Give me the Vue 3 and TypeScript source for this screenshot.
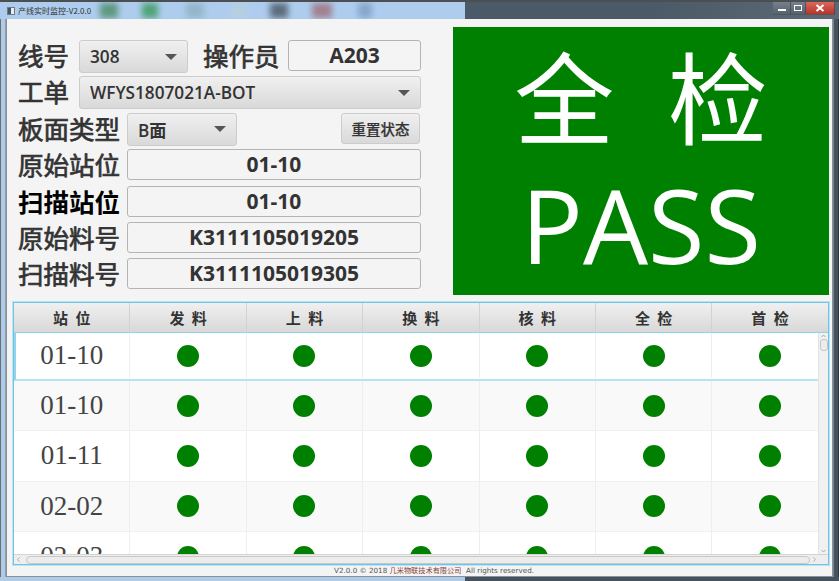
<template>
  <div class="window">
    <div class="titlebar">
      <span class="aero aero-blue"></span>
      <span class="aero aero-dark"></span>
      <span v-for="b in blurs" :key="b.left" class="blur" :style="{ left: b.left + 'px', width: b.width + 'px', background: b.color }"></span>
      <span class="app-icon"><i></i></span>
      <span class="title">产线实时监控-V2.0.0</span>
      <div class="win-btns">
        <span class="win-btn"><svg width="10" height="8" viewBox="0 0 10 8"><rect x="1" y="5" width="8" height="2" fill="#fff" /></svg></span>
        <span class="win-btn max"><svg width="10" height="8" viewBox="0 0 10 8"><rect x="1.5" y="1.5" width="7" height="5" fill="none" stroke="#fff" /></svg></span>
        <span class="win-btn close"><svg width="10" height="8" viewBox="0 0 10 8"><path d="M1.5 1 L8.5 7 M8.5 1 L1.5 7" stroke="#fff" stroke-width="2" /></svg></span>
      </div>
    </div>

    <div class="middle">
      <div class="frame frame-left"></div>
      <div class="client">
        <div class="top">
          <div class="form">
            <div class="row">
              <label class="lb lb2">线号</label>
              <div class="select s-line"><span>308</span><i class="caret"></i></div>
              <label class="lb lb3 op">操作员</label>
              <div class="field f-op">A203</div>
            </div>
            <div class="row">
              <label class="lb lb2">工单</label>
              <div class="select s-order"><span>WFYS1807021A-BOT</span><i class="caret"></i></div>
            </div>
            <div class="row">
              <label class="lb lb4">板面类型</label>
              <div class="select s-side"><span>B面</span><i class="caret"></i></div>
              <button class="reset">重置状态</button>
            </div>
            <div v-for="f in fields" :key="f.label" class="row">
              <label class="lb lb4" :class="{ strong: f.strong }">{{ f.label }}</label>
              <div class="field grow">{{ f.value }}</div>
            </div>
          </div>
          <div class="result">
            <div class="r-top">全 检</div>
            <div class="r-bottom">PASS</div>
          </div>
        </div>

        <div class="table">
          <div class="thead">
            <div v-for="h in headers" :key="h" class="th">{{ h }}</div>
            <div class="th-fill"></div>
          </div>
          <div class="tbody">
            <div class="rows">
              <div v-for="(r, i) in rows" :key="i" class="tr" :class="{ selected: i === 0, odd: i % 2 === 1 }">
                <div class="td code">{{ r }}</div>
                <div v-for="n in 6" :key="n" class="td"><span class="dot"></span></div>
              </div>
            </div>
            <div class="vbar">
              <svg width="9" height="6" viewBox="0 0 9 6"><path d="M2.5 4 L4.5 2 L6.5 4" fill="none" stroke="#aaa" /></svg>
              <span class="vthumb"></span>
              <svg class="v-down" width="9" height="6" viewBox="0 0 9 6"><path d="M2.5 2 L4.5 4 L6.5 2" fill="none" stroke="#aaa" /></svg>
            </div>
          </div>
          <div class="hbar">
            <svg width="9" height="9" viewBox="0 0 9 9"><path d="M5.5 2.5 L3.5 4.5 L5.5 6.5" fill="none" stroke="#aaa" /></svg>
            <span class="hthumb"></span>
            <svg width="9" height="9" viewBox="0 0 9 9"><path d="M3.5 2.5 L5.5 4.5 L3.5 6.5" fill="none" stroke="#aaa" /></svg>
            <span class="corner"></span>
          </div>
        </div>

        <div class="footer">V2.0.0 © 2018 <em>几米物联技术有限公司</em>&nbsp; All rights reserved.</div>
      </div>
      <div class="frame frame-right"></div>
    </div>

    <div class="bottom-edge"></div>
  </div>
</template>

<script setup lang="ts">
interface FieldRow {
  label: string;
  value: string;
  strong?: boolean;
}

const fields: FieldRow[] = [
  { label: '原始站位', value: '01-10' },
  { label: '扫描站位', value: '01-10', strong: true },
  { label: '原始料号', value: 'K3111105019205' },
  { label: '扫描料号', value: 'K3111105019305' }
];

const headers = ['站 位', '发 料', '上 料', '换 料', '核 料', '全 检', '首 检'];
const rows = ['01-10', '01-10', '01-11', '02-02', '02-03'];

// blurred desktop icons showing through the aero title bar
const blurs = [
  { left: 100, width: 18, color: '#4f8f6a' },
  { left: 142, width: 16, color: '#3f9a63' },
  { left: 186, width: 18, color: '#8fb2c4' },
  { left: 232, width: 14, color: '#b9cfdd' },
  { left: 270, width: 18, color: '#4d5c68' },
  { left: 312, width: 20, color: '#a0747f' },
  { left: 358, width: 14, color: '#7f9fc4' }
];
</script>

<style>
html,
body {
  margin: 0;
  overflow: hidden;
  background: #3a4149;
}
</style>

<style scoped>
.window {
  width: 839px;
  height: 581px;
  display: flex;
  flex-direction: column;
  font-family: "Open Sans", "Noto Sans CJK SC", sans-serif;
  overflow: hidden;
}

.titlebar {
  position: relative;
  height: 19px;
  flex: none;
  padding-left: 7px;
  display: flex;
  align-items: center;
  border-top: 2px solid #4c4f52;
  box-sizing: border-box;
  overflow: hidden;
}

.aero {
  position: absolute;
  top: 0;
  bottom: 0;
}

.aero-blue {
  left: 0;
  width: 465px;
  background: #aecdee;
}

.aero-dark {
  left: 465px;
  right: 0;
  background: linear-gradient(90deg, #4a5a68, #4b5a68 50%, #5d6975);
}

.blur {
  position: absolute;
  top: 1px;
  height: 15px;
  filter: blur(3px);
  opacity: 0.85;
}

.app-icon {
  position: relative;
  width: 6px;
  height: 6px;
  border: 1px solid #778;
  background: #e8eef2;
}

.app-icon i {
  position: absolute;
  left: 0;
  top: 0;
  width: 3px;
  height: 6px;
  background: #3c5668;
}

.title {
  position: relative;
  margin-left: 3px;
  font-size: 8px;
  color: #333;
  font-family: "Noto Sans CJK SC", sans-serif;
  line-height: 1;
}

.win-btns {
  position: absolute;
  right: 4px;
  top: 0;
  display: flex;
  height: 13px;
}

.win-btn {
  width: 18px;
  box-sizing: border-box;
  display: flex;
  align-items: center;
  justify-content: center;
  border: 1px solid rgba(60, 70, 80, 0.7);
  border-top: none;
  border-left: none;
  background: linear-gradient(#75818d, #56616c);
}

.win-btn.max {
  width: 15px;
}

.win-btn.close {
  width: 29px;
  background: linear-gradient(#d9695a, #b5352a);
}

.middle {
  flex: 1;
  min-height: 0;
  display: flex;
}

.frame {
  width: 6px;
  flex: none;
  box-sizing: border-box;
}

.frame-left {
  background: #aecbe8;
  border-left: 1px solid #6a6f75;
  border-right: 1px solid #8f9dae;
}

.frame-right {
  background: #46525e;
  border-left: 1px solid #77828d;
  border-right: 1px solid #2f363d;
}

.bottom-edge {
  height: 4px;
  flex: none;
  background: #aecbe8;
  border-right: 374px solid #46525e;
}

.client {
  flex: 1;
  min-width: 0;
  background: #f4f4f4;
  display: flex;
  flex-direction: column;
  padding: 8px 3px 0 6px;
  border-left: 1px solid #8b9197;
  border-right: 1px solid #8b9197;
  border-bottom: 1px solid #8b9197;
  box-sizing: border-box;
}

.top {
  display: flex;
  height: 268px;
  flex: none;
}

.form {
  width: 408px;
  padding: 13px 0 0 5px;
  box-sizing: border-box;
  display: flex;
  flex-direction: column;
  flex: none;
}

.row {
  display: flex;
  align-items: flex-start;
  height: 36.4px;
  flex: none;
}

.lb {
  font-family: "Noto Sans CJK SC", sans-serif;
  font-size: 25.5px;
  font-weight: 400;
  -webkit-text-stroke: 0.7px #333;
  color: #333;
  line-height: 30px;
  white-space: nowrap;
}

.lb2 {
  width: 61px;
  flex: none;
}

.lb3 {
  width: 85px;
  flex: none;
}

.lb4 {
  width: 109px;
  flex: none;
}

.op {
  margin-left: 15px;
}

.strong {
  font-weight: 700;
  color: #000;
  -webkit-text-stroke: 0;
}

.select {
  box-sizing: border-box;
  height: 33px;
  display: flex;
  align-items: center;
  justify-content: space-between;
  padding: 0 10px;
  border-radius: 3px;
  border: 1px solid #cccccc;
  background: linear-gradient(#f0f0f0, #d9d9d9);
  font-size: 17.2px;
  font-weight: 600;
  color: #333;
  font-family: "Open Sans", "Noto Sans CJK SC", sans-serif;
}

.s-line {
  width: 109px;
}

.s-order {
  width: 342px;
}

.s-side {
  width: 110px;
}

.caret {
  width: 0;
  height: 0;
  border-left: 6px solid transparent;
  border-right: 6px solid transparent;
  border-top: 6px solid #555;
}

.field {
  box-sizing: border-box;
  height: 31px;
  padding-bottom: 1px;
  display: flex;
  align-items: center;
  justify-content: center;
  border: 1px solid #b4b4b4;
  border-radius: 3px;
  background: #f4f4f4;
  font-size: 21px;
  font-weight: 700;
  color: #333;
}

.f-op {
  width: 133px;
}

.grow {
  width: 294px;
}

.reset {
  box-sizing: border-box;
  width: 79px;
  height: 31px;
  margin-left: auto;
  margin-right: 1px;
  padding: 0;
  border: 1px solid #cccccc;
  border-radius: 3px;
  background: linear-gradient(#f0f0f0, #d9d9d9);
  font-family: "Noto Sans CJK SC", sans-serif;
  font-size: 14.5px;
  font-weight: 500;
  -webkit-text-stroke: 0.2px #333;
  color: #333;
}

.result {
  margin-left: 32px;
  width: 376px;
  height: 268px;
  flex: none;
  background: #008000;
  color: #fff;
  display: flex;
  flex-direction: column;
  align-items: center;
}

.r-top {
  font-family: "Noto Sans CJK SC", sans-serif;
  font-size: 100px;
  line-height: 124px;
  margin-top: 5px;
  white-space: pre;
  word-spacing: 31px;
}

.r-bottom {
  font-family: "Open Sans", sans-serif;
  font-size: 103px;
  line-height: 130px;
  margin-top: 3px;
}

.table {
  margin-top: 7px;
  width: 816px;
  height: 263px;
  flex: none;
  box-sizing: border-box;
  border: 1px solid #6cc6e8;
  outline: 1px solid rgba(127, 205, 234, 0.45);
  display: flex;
  flex-direction: column;
  background: #fff;
  overflow: hidden;
}

.thead {
  display: flex;
  height: 29px;
  flex: none;
  background: linear-gradient(#f0f0f0, #d8d8d8);
  border-bottom: 1px solid #8fd3ec;
}

.th {
  width: 116.4px;
  box-sizing: border-box;
  flex: none;
  display: flex;
  align-items: center;
  justify-content: center;
  border-right: 1px solid #d2d2d2;
  font-family: "Noto Sans CJK SC", sans-serif;
  font-size: 15px;
  font-weight: 700;
  color: #333;
  white-space: pre;
  word-spacing: 4px;
}

.th-fill {
  flex: 1;
}

.tbody {
  flex: 1;
  min-height: 0;
  display: flex;
}

.rows {
  flex: 1;
  min-width: 0;
  overflow: hidden;
}

.tr {
  display: flex;
  height: 50.3px;
  box-sizing: border-box;
  background: #fff;
  border-bottom: 1px solid #f0f0f0;
}

.tr.odd {
  background: #f9f9f9;
}

.tr.selected {
  height: 48px;
  padding-bottom: 1px;
  border: 2px solid #b5e4f3;
  border-top: none;
  border-right: none;
  border-left-color: #8fd3ec;
}

.td {
  width: 116.4px;
  flex: none;
  box-sizing: border-box;
  display: flex;
  align-items: center;
  justify-content: center;
  border-right: 1px solid #eeeeee;
}

.tr.selected .td:first-child {
  width: 114.4px;
  padding-right: 2px;
}

.code {
  font-family: "Liberation Serif", serif;
  font-size: 27px;
  color: #444;
}

.dot {
  width: 22px;
  height: 22px;
  border-radius: 50%;
  background: #008000;
}

.vbar {
  width: 9px;
  flex: none;
  background: #f1f1f1;
  border-left: 1px solid #e2e2e2;
  display: flex;
  flex-direction: column;
  align-items: center;
}

.vthumb {
  width: 6px;
  height: 10px;
  border: 1px solid #c4c4c4;
  border-radius: 3px;
  background: #ececec;
}

.v-down {
  margin-top: auto;
}

.hbar {
  height: 9px;
  flex: none;
  display: flex;
  align-items: center;
  background: #eeeeee;
  border-top: 1px solid #d4d4d4;
}

.hthumb {
  flex: 1;
  height: 6px;
  border: 1px solid #c8c8c8;
  border-radius: 4px;
  background: #ececec;
  margin-left: 3px;
}

.corner {
  width: 9px;
}

.footer {
  flex: 1;
  padding-left: 26px;
  text-align: center;
  font-size: 7.2px;
  line-height: 12px;
  color: #555;
  font-family: "DejaVu Sans", "Noto Sans CJK SC", sans-serif;
  white-space: nowrap;
}

.footer em {
  font-style: normal;
  color: #8a4038;
}
</style>
